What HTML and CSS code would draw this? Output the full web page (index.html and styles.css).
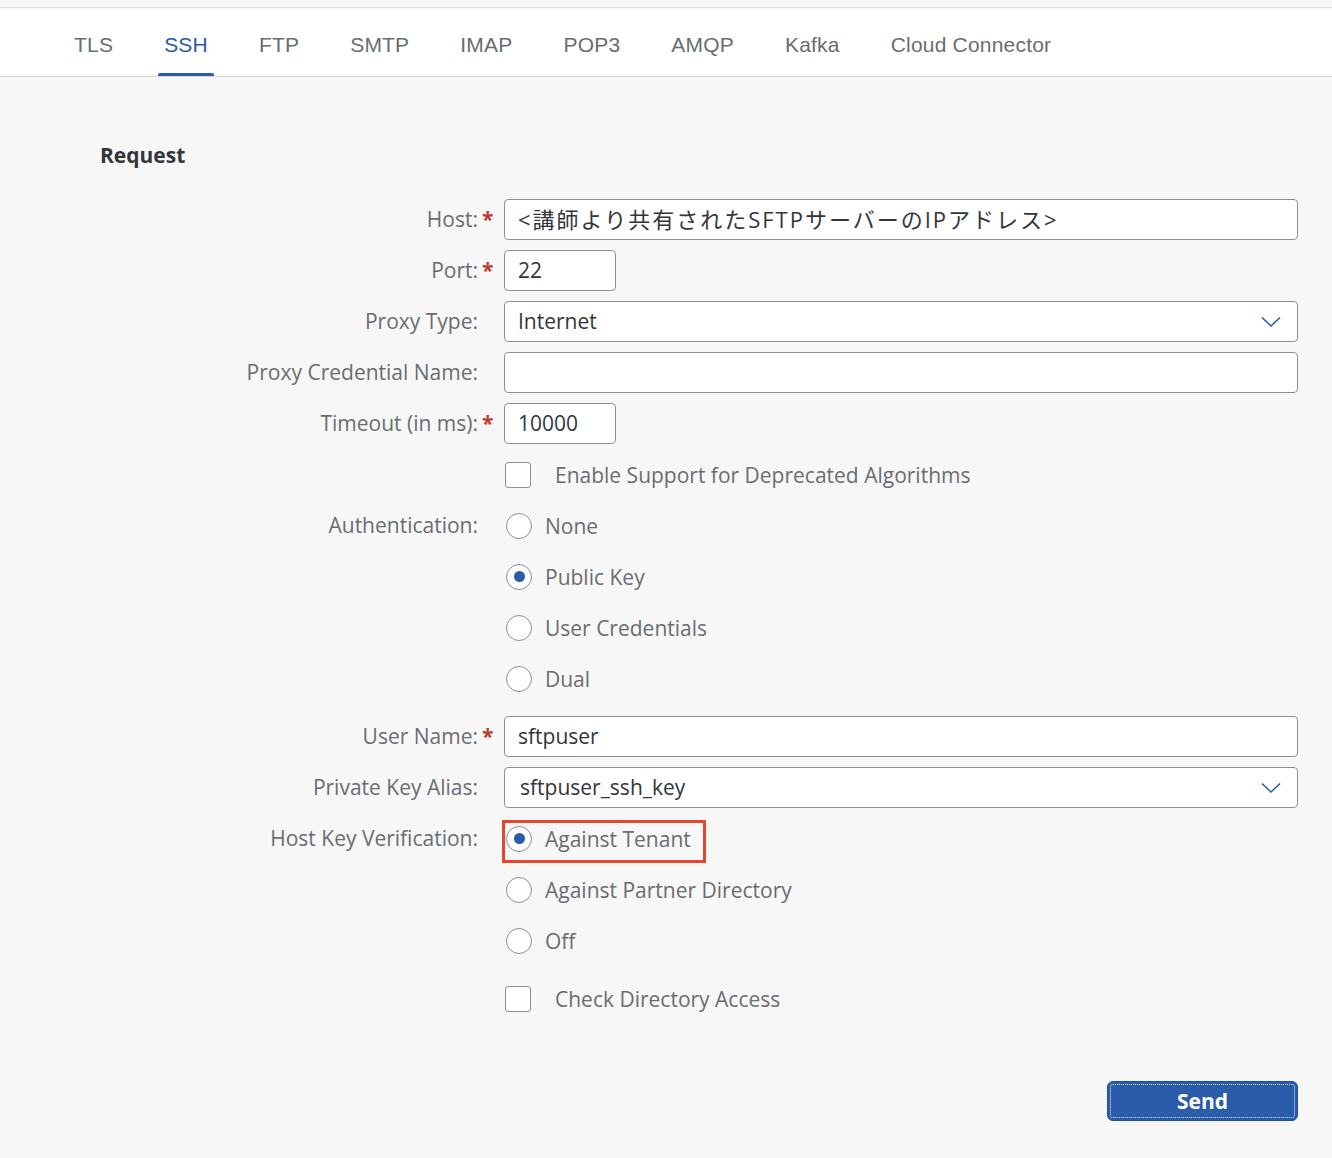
FILE: index.html
```html
<!DOCTYPE html>
<html lang="ja">
<head>
<meta charset="utf-8">
<title>SSH Connectivity Test</title>
<link rel="stylesheet" href="styles.css">
</head>
<body>
<div class="topstrip"></div>
<nav class="tabbar">
  <span class="tab">TLS</span>
  <span class="tab active">SSH</span>
  <span class="tab">FTP</span>
  <span class="tab">SMTP</span>
  <span class="tab">IMAP</span>
  <span class="tab">POP3</span>
  <span class="tab">AMQP</span>
  <span class="tab">Kafka</span>
  <span class="tab">Cloud Connector</span>
</nav>
<main class="content">
  <h2 class="section-title">Request</h2>
  <div class="form">
    <div class="row">
      <div class="label"><span>Host:</span><span class="req">*</span></div>
      <div class="control"><div class="input host">&lt;講師より共有されたSFTPサーバーのIPアドレス&gt;</div></div>
    </div>
    <div class="row">
      <div class="label"><span>Port:</span><span class="req">*</span></div>
      <div class="control"><div class="input short">22</div></div>
    </div>
    <div class="row">
      <div class="label"><span>Proxy Type:</span><span class="req"></span></div>
      <div class="control"><div class="input select"><span>Internet</span><svg class="chev" width="20" height="12" viewBox="0 0 20 12"><polyline points="1,1.5 10,10 19,1.5"/></svg></div></div>
    </div>
    <div class="row">
      <div class="label"><span>Proxy Credential Name:</span><span class="req"></span></div>
      <div class="control"><div class="input"></div></div>
    </div>
    <div class="row">
      <div class="label"><span>Timeout (in ms):</span><span class="req">*</span></div>
      <div class="control"><div class="input short">10000</div></div>
    </div>
    <div class="row">
      <div class="label"></div>
      <div class="control"><div class="check"><span class="box"></span><span>Enable Support for Deprecated Algorithms</span></div></div>
    </div>
    <div class="row top">
      <div class="label"><span>Authentication:</span><span class="req"></span></div>
      <div class="control radios">
        <div class="radio"><span class="circle"></span><span>None</span></div>
        <div class="radio"><span class="circle on"></span><span>Public Key</span></div>
        <div class="radio"><span class="circle"></span><span>User Credentials</span></div>
        <div class="radio"><span class="circle"></span><span>Dual</span></div>
      </div>
    </div>
    <div class="row sp">
      <div class="label"><span>User Name:</span><span class="req">*</span></div>
      <div class="control"><div class="input">sftpuser</div></div>
    </div>
    <div class="row">
      <div class="label"><span>Private Key Alias:</span><span class="req"></span></div>
      <div class="control"><div class="input select alias"><span>sftpuser_ssh_key</span><svg class="chev" width="20" height="12" viewBox="0 0 20 12"><polyline points="1,1.5 10,10 19,1.5"/></svg></div></div>
    </div>
    <div class="row top">
      <div class="label"><span>Host Key Verification:</span><span class="req"></span></div>
      <div class="control radios">
        <div class="radio highlight"><span class="circle on"></span><span>Against Tenant</span></div>
        <div class="radio"><span class="circle"></span><span>Against Partner Directory</span></div>
        <div class="radio"><span class="circle"></span><span>Off</span></div>
      </div>
    </div>
    <div class="row sp">
      <div class="label"></div>
      <div class="control"><div class="check"><span class="box"></span><span>Check Directory Access</span></div></div>
    </div>
  </div>
  <div class="actions">
    <button class="btn" type="button">Send</button>
  </div>
</main>
</body>
</html>
```

FILE: styles.css
```css
html, body {
  margin: 0;
  padding: 0;
}

body {
  background: #f7f7f7;
  font-family: "Open Sans", "Noto Sans CJK JP", sans-serif;
  color: #32363a;
  min-height: 1158px;
}

.topstrip {
  height: 7px;
  background: #f7f7f7;
}

.tabbar {
  display: flex;
  gap: 39px;
  padding-left: 68px;
  height: 70px;
  box-sizing: border-box;
  background: #fff;
  border-top: 1px solid #dcdcdc;
  border-bottom: 1px solid #d9d9d9;
  box-shadow: inset 0 3px 3px -2px rgba(0, 0, 0, 0.05);
}

.tab {
  position: relative;
  display: flex;
  align-items: center;
  height: 68px;
  box-sizing: border-box;
  padding: 5px 6px 0;
  font-family: "Liberation Sans", Arial, sans-serif;
  font-size: 21px;
  line-height: 24px;
  letter-spacing: 0.2px;
  color: #6a6d70;
}

.tab.active {
  color: #2a5aa8;
}

.tab.active::after {
  content: "";
  position: absolute;
  left: 0;
  right: 0;
  bottom: 0;
  height: 3px;
  background: #2a5aa8;
  border-radius: 2px 2px 0 0;
}

.content {
  padding: 64px 34px 40px 0;
}

.section-title {
  margin: 0 0 30px 100px;
  font-size: 21px;
  font-weight: 700;
  line-height: 28px;
  color: #32363a;
}

.form {
  display: flex;
  flex-direction: column;
  gap: 10px;
}

.row {
  display: flex;
  align-items: center;
  gap: 10px;
  min-height: 41px;
}

.row.top {
  align-items: flex-start;
}

.row.sp {
  margin-top: 7px;
}

.label {
  width: 494px;
  flex: none;
  height: 41px;
  display: flex;
  justify-content: flex-end;
  align-items: center;
  font-size: 21px;
  line-height: 29px;
  color: #6a6d70;
}

.req {
  width: 16px;
  box-sizing: border-box;
  padding-left: 4px;
  color: #c0392f;
  font-weight: 700;
}

.control {
  flex: 1;
  display: flex;
}

.input {
  flex: 1;
  height: 41px;
  box-sizing: border-box;
  border: 1px solid #89919a;
  border-radius: 4px;
  background: #fff;
  padding: 0 13px;
  display: flex;
  align-items: center;
  font-size: 21px;
  line-height: 29px;
  color: #32363a;
  white-space: nowrap;
}

.input.host {
  font-size: 22px;
  letter-spacing: 2px;
}

.input.short {
  flex: none;
  width: 112px;
}

.input.select {
  justify-content: space-between;
  padding-right: 16px;
}

.input.alias {
  padding-left: 15px;
}

.chev {
  flex: none;
}

.chev polyline {
  fill: none;
  stroke: #2a5aa8;
  stroke-width: 1.6;
}

.check {
  display: flex;
  align-items: center;
  gap: 24px;
  height: 41px;
  margin-left: 1px;
  font-size: 21px;
  color: #6a6d70;
}

.box {
  width: 26px;
  height: 26px;
  box-sizing: border-box;
  border: 1px solid #89919a;
  border-radius: 3px;
  background: #fff;
}

.radios {
  flex-direction: column;
  align-items: flex-start;
  gap: 10px;
}

.radio {
  position: relative;
  display: flex;
  align-items: center;
  gap: 13px;
  height: 41px;
  font-size: 21px;
  color: #6a6d70;
}

.circle {
  width: 26px;
  height: 26px;
  margin-left: 2px;
  box-sizing: border-box;
  border: 1.5px solid #89919a;
  border-radius: 50%;
  background: #fff;
  display: flex;
  align-items: center;
  justify-content: center;
}

.circle.on::before {
  content: "";
  width: 11px;
  height: 11px;
  border-radius: 50%;
  background: #2a5aa8;
}

.highlight::after {
  content: "";
  position: absolute;
  left: -2px;
  right: -15px;
  top: 2px;
  bottom: -4px;
  border: 3px solid #e6462d;
}

.actions {
  display: flex;
  justify-content: flex-end;
  margin-top: 62px;
}

.btn {
  width: 191px;
  height: 40px;
  box-sizing: border-box;
  background: #2b5ca9;
  border: 1px solid #1f4f9a;
  border-radius: 6px;
  color: #fff;
  font-family: "Open Sans", sans-serif;
  font-weight: 700;
  font-size: 21px;
  display: flex;
  align-items: center;
  justify-content: center;
  outline: 1px dotted rgba(255, 255, 255, 0.85);
  outline-offset: -4px;
  padding: 0;
}
```
